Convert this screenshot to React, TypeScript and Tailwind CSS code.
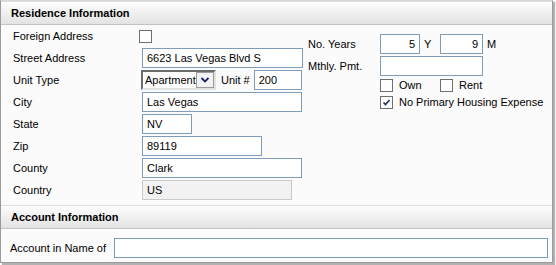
import React from "react";

// Classic blue-grey bordered text box
function TextBox({
  value = "",
  className = "",
  right = false,
  disabled = false,
}: {
  value?: string;
  className?: string;
  right?: boolean;
  disabled?: boolean;
}) {
  return (
    <div
      className={
        "h-[20px] border px-[4px] text-[11px] leading-[18px] text-black whitespace-nowrap overflow-hidden " +
        (disabled ? "border-[#c9c9c9] bg-[#f2f2f2] " : "border-[#7f9db9] bg-white ") +
        (right ? "text-right " : "") +
        className
      }
    >
      {value}
    </div>
  );
}

function CheckBox({ checked = false }: { checked?: boolean }) {
  return (
    <span className="relative block w-[13px] h-[13px] border border-[#6f6f6f] bg-white shrink-0">
      {checked && (
        <svg
          viewBox="0 0 13 13"
          className="absolute left-[-1px] top-[-1px] w-[13px] h-[13px]"
        >
          <path
            d="M3.5 6.5 L5.5 8.5 L9.5 4"
            fill="none"
            stroke="#1e2a5a"
            strokeWidth="1.6"
          />
        </svg>
      )}
    </span>
  );
}

function SectionHeader({ title }: { title: string }) {
  return (
    <div className="border-t border-b border-t-[#dedede] border-b-[#c4c4c4] bg-gradient-to-b from-[#fdfdfd] to-[#e3e3e3] pl-[10px] pt-[1px] text-[11px] font-bold leading-[21px] text-black">
      {title}
    </div>
  );
}

const rows: { label: string; control: React.ReactNode }[] = [
  {
    label: "Foreign Address",
    control: (
      <div className="-ml-[3px]">
        <CheckBox />
      </div>
    ),
  },
  { label: "Street Address", control: <TextBox value="6623 Las Vegas Blvd S" className="w-[161px]" /> },
  {
    label: "Unit Type",
    control: (
      <div className="flex items-center -ml-[1px]">
        <div className="flex w-[75px] h-[20px] border-2 border-t-[#6b6b6b] border-l-[#6b6b6b] border-r-[#e2e2e2] border-b-[#e2e2e2] bg-white">
          <span className="flex-1 pl-[2px] text-[11px] leading-[16px]">Apartment</span>
          <span className="flex w-[19px] h-full items-center justify-center border border-[#9a9a9a] bg-[#f2f2f2]">
            <svg viewBox="0 0 10 8" className="w-[10px] h-[8px]">
              <path d="M1.5 2 L5 5.5 L8.5 2" fill="none" stroke="#1c2459" strokeWidth="1.8" />
            </svg>
          </span>
        </div>
        <span className="ml-[5px] text-[11px]">Unit #</span>
        <TextBox value="200" className="ml-[4px] w-[48px]" />
      </div>
    ),
  },
  { label: "City", control: <TextBox value="Las Vegas" className="w-[160px]" /> },
  { label: "State", control: <TextBox value="NV" className="w-[50px]" /> },
  { label: "Zip", control: <TextBox value="89119" className="w-[120px]" /> },
  { label: "County", control: <TextBox value="Clark" className="w-[160px]" /> },
  { label: "Country", control: <TextBox value="US" disabled className="w-[150px]" /> },
];

export default function App() {
  return (
    <div
      className="w-[556px] h-[265px] bg-white text-black"
      style={{ fontFamily: '"Liberation Sans", Arial, sans-serif' }}
    >
      <div className="flex flex-col w-[553px] h-[263px] border border-[#9a9a9a] border-t-[#d8d8d8] bg-[#fbfbfb] shadow-[2px_2px_1px_rgba(0,0,0,0.3)]">
        <SectionHeader title="Residence Information" />

        <div className="flex h-[180px]">
          {/* left column */}
          <div className="grid grid-cols-[129px_1fr] auto-rows-[22px] w-[307px] pl-[12px] items-center text-[11px]">
            {rows.map((r) => (
              <React.Fragment key={r.label}>
                <span className="whitespace-nowrap">{r.label}</span>
                <div>{r.control}</div>
              </React.Fragment>
            ))}
          </div>

          {/* right column */}
          <div className="flex flex-col pt-[9px] text-[11px]">
            <div className="flex items-center h-[20px]">
              <span className="w-[72px]">No. Years</span>
              <TextBox value="5" right className="w-[40px]" />
              <span className="ml-[4px] w-[16px]">Y</span>
              <TextBox value="9" right className="w-[43px]" />
              <span className="ml-[4px]">M</span>
            </div>
            <div className="flex items-center h-[20px] mt-[2px]">
              <span className="w-[72px]">Mthly. Pmt.</span>
              <TextBox className="w-[103px]" />
            </div>
            <div className="flex items-center h-[14px] mt-[2px] pl-[72px]">
              <CheckBox />
              <span className="ml-[6px] w-[41px]">Own</span>
              <CheckBox />
              <span className="ml-[6px]">Rent</span>
            </div>
            <div className="flex items-center h-[14px] mt-[3px] pl-[72px]">
              <CheckBox checked />
              <span className="ml-[6px]">No Primary Housing Expense</span>
            </div>
          </div>
        </div>

        <SectionHeader title="Account Information" />

        <div className="flex items-center h-[32px] pt-[6px] pl-[9px] text-[11px]">
          <span className="w-[104px]">Account in Name of</span>
          <TextBox className="w-[434px]" />
        </div>
      </div>
    </div>
  );
}
